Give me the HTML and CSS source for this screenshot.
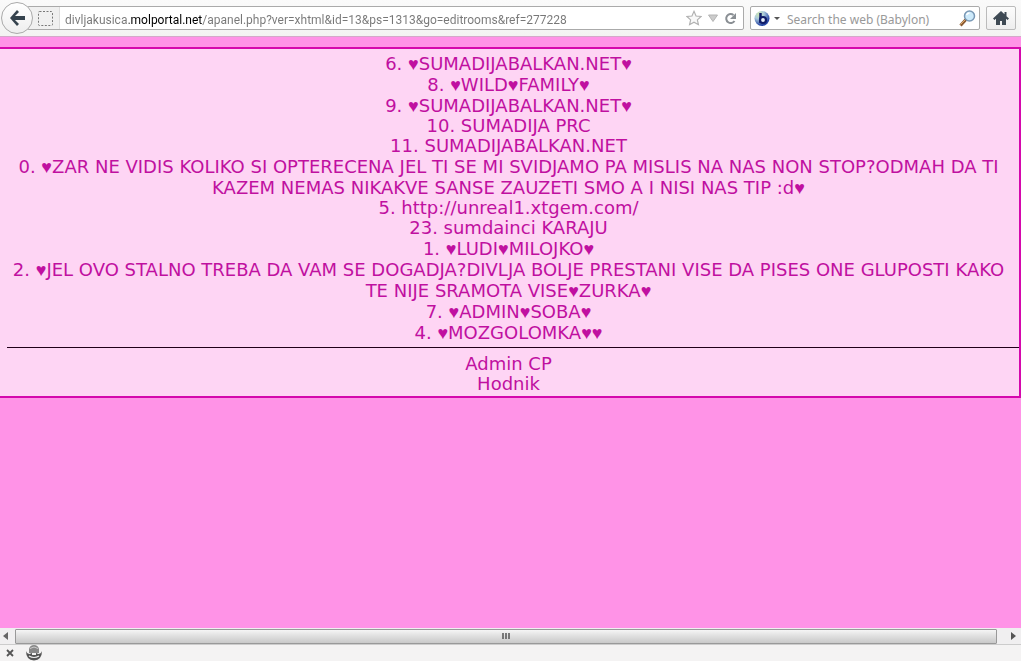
FILE: index.html
```html
<!DOCTYPE html>
<html lang="sr">
<head>
<meta charset="utf-8">
<meta name="viewport" content="width=device-width, initial-scale=1">
<title>Edit rooms</title>
<link rel="stylesheet" href="styles.css">
</head>
<body>
<header class="toolbar">
  <button class="back" type="button" aria-label="Back">
    <svg width="18" height="18" viewBox="0 0 18 18"><path d="M9 1 2 9l7 8 2-2-4-4h10V7H7l4-4z" fill="#35424d"/></svg>
  </button>
  <div class="address">
    <span class="identity"><svg width="15" height="15" viewBox="0 0 15 15"><rect x=".5" y=".5" width="14" height="14" rx="1" fill="none" stroke="#777" stroke-dasharray="2 1.5"/></svg></span>
    <input class="url" type="text" aria-label="Address" value="divljakusica.molportal.net/apanel.php?ver=xhtml&amp;id=13&amp;ps=1313&amp;go=editrooms&amp;ref=277228">
    <button class="icon" type="button" aria-label="Bookmark">
      <svg width="16" height="16" viewBox="0 0 18 17"><path d="m9 1 2.300 5.200 5.700.6-4.200 3.800 1.200 5.400-5-2.800L4 16l1.200-5.400L1 6.800l5.700-.6z" fill="#f8f8f8" stroke="#b0b0b0" stroke-width="1.300"/></svg>
    </button>
    <button class="icon" type="button" aria-label="History">
      <svg width="10" height="8" viewBox="0 0 10 8"><path d="M.5 1h9L5 7.500z" fill="#ccc" stroke="#b4b4b4"/></svg>
    </button>
    <button class="icon" type="button" aria-label="Reload">
      <svg width="13" height="13" viewBox="0 0 13 13"><path d="M9.500 3A4.500 4.500 0 1 0 10.500 9" fill="none" stroke="#8a8f94" stroke-width="2"/><path d="M12 1v6H6z" fill="#8a8f94"/></svg>
    </button>
  </div>
  <div class="search">
    <button class="icon engine" type="button" aria-label="Search engine">
      <svg width="28" height="17" viewBox="0 0 28 17"><defs><radialGradient id="orb" cx="30%" cy="20%" r="75%"><stop offset="0" stop-color="#cfe8b4"/><stop offset=".45" stop-color="#a9c9dc"/><stop offset="1" stop-color="#2746a4"/></radialGradient></defs><circle cx="8" cy="8.500" r="7.500" fill="url(#orb)"/><path d="M6.500 3v10" stroke="#101c68" stroke-width="2.500"/><circle cx="9" cy="10" r="3" fill="#e6eef8" stroke="#101c68" stroke-width="2.200"/><path d="M20 7h6l-3 3z" fill="#555"/></svg>
    </button>
    <input class="query" type="text" aria-label="Search" placeholder="Search the web (Babylon)">
    <button class="icon" type="button" aria-label="Search">
      <svg width="17" height="17" viewBox="0 0 17 17"><path d="m7 9.500-5.500 6" stroke="#8b5a32" stroke-width="3"/><path d="m6.500 9.500-5 5" stroke="#e0aa68"/><circle cx="10.500" cy="6" r="5" fill="#cdeafb" stroke="#7998b5" stroke-width="1.500"/><path d="M7.500 5q1-2 3-2" fill="none" stroke="#fff" stroke-width="1.500"/></svg>
    </button>
  </div>
  <button class="home" type="button" aria-label="Home">
    <svg width="16" height="14" viewBox="0 0 16 14"><path d="M8 0 0 7.500 1.500 9 3 7.800V14h4v-4h2v4h4V7.800L14.500 9 16 7.500l-2.500-2.300V1h-2v2.300z" fill="#3f4a54"/></svg>
  </button>
</header>

<main class="page">
  <section class="panel">
    <nav class="rooms">
      <a href="#">6. <i>♥</i>SUMADIJABALKAN.NET<i>♥</i></a>
      <a href="#">8. <i>♥</i>WILD<i>♥</i>FAMILY<i>♥</i></a>
      <a href="#">9. <i>♥</i>SUMADIJABALKAN.NET<i>♥</i></a>
      <a href="#" class="plain">10. SUMADIJA PRC</a>
      <a href="#" class="plain">11. SUMADIJABALKAN.NET</a>
      <a href="#">0. <i>♥</i>ZAR NE VIDIS KOLIKO SI OPTERECENA JEL TI SE MI SVIDJAMO PA MISLIS NA NAS NON STOP?ODMAH DA TI KAZEM NEMAS NIKAKVE SANSE ZAUZETI SMO A I NISI NAS TIP :d<i>♥</i></a>
      <a href="#" class="plain">5. http://unreal1.xtgem.com/</a>
      <a href="#" class="plain">23. sumdainci KARAJU</a>
      <a href="#">1. <i>♥</i>LUDI<i>♥</i>MILOJKO<i>♥</i></a>
      <a href="#">2. <i>♥</i>JEL OVO STALNO TREBA DA VAM SE DOGADJA?DIVLJA BOLJE PRESTANI VISE DA PISES ONE GLUPOSTI KAKO TE NIJE SRAMOTA VISE<i>♥</i>ZURKA<i>♥</i></a>
      <a href="#">7. <i>♥</i>ADMIN<i>♥</i>SOBA<i>♥</i></a>
      <a href="#">4. <i>♥</i>MOZGOLOMKA<i>♥♥</i></a>
    </nav>
    <hr class="rule">
    <nav class="rooms">
      <a href="#" class="plain">Admin CP</a>
      <a href="#" class="plain">Hodnik</a>
    </nav>
  </section>
</main>

<div class="scrollbar">
  <button class="arrow" type="button" aria-label="Scroll left"><svg width="5" height="8" viewBox="0 0 5 8"><path d="M5 0v8L0 4z" fill="#666"/></svg></button>
  <div class="track"><div class="thumb"><svg width="9" height="7" viewBox="0 0 9 7"><path d="M1 0v6M4 0v6M7 0v6" stroke="#555" stroke-width="1.500"/></svg></div></div>
  <button class="arrow right" type="button" aria-label="Scroll right"><svg width="5" height="8" viewBox="0 0 5 8"><path d="M0 0v8l5-4z" fill="#555"/></svg></button>
</div>
<footer class="addons">
  <button class="icon" type="button" aria-label="Close add-on bar"><svg width="8" height="8" viewBox="0 0 8 8"><path d="m1 1 6 6m0-6L1 7" stroke="#555" stroke-width="1.800"/></svg></button>
  <button class="icon" type="button" aria-label="Add-on"><svg width="16" height="16" viewBox="0 0 16 16"><path d="M3 4q1-4 5-4t5 4v4H3z" fill="#888"/><path d="M4 3.500q4-3 8 0" fill="none" stroke="#ccc"/><path d="M0 6q1 3 4 3 1-1 2-1v2h4V8q1 0 2 1 3 0 4-3 0 9-8 9.500Q0 15 0 6" fill="#555"/><path d="M3 11q5 3 10 0" fill="none" stroke="#eee" stroke-width="1.200"/></svg></button>
</footer>
</body>
</html>
```
FILE: styles.css
```css
* { box-sizing: border-box; }
body {
  margin: 0;
  min-height: 100vh;
  display: flex;
  flex-direction: column;
  background: #f4f3f3;
  font-family: "DejaVu Sans", Verdana, sans-serif;
}
button { padding: 0; border: 0; background: none; display: flex; align-items: center; justify-content: center; }
svg { display: block; flex: none; }
input { border: 0; outline: 0; padding: 0; min-width: 0; background: none; font: 12px "Noto Sans", sans-serif; }

.toolbar {
  height: 37px;
  padding: 0 5px 0 1px;
  display: flex;
  align-items: center;
  background: linear-gradient(#fafafa, #f3f3f2);
  border-bottom: 1px solid #d3a9c9;
}
.back {
  width: 32px;
  height: 32px;
  flex: none;
  z-index: 1;
  border: 1px solid #aaa;
  border-radius: 50%;
  background: linear-gradient(#fff, #eee);
}
.address, .search {
  height: 24px;
  display: flex;
  align-items: center;
  border: 1px solid #aaa;
  border-radius: 2px;
  background: #fff;
}
.address { flex: 1; margin-left: -6px; padding-right: 6px; gap: 6px; }
.identity {
  width: 32px;
  height: 22px;
  padding-left: 10px;
  display: flex;
  align-items: center;
  background: #f0f0f0;
  border-right: 1px solid #ddd;
}
.url {
  flex: 1;
  height: 22px;
  padding-top: 3px;
  margin-left: -1px;
  font-family: Roboto, sans-serif;
  color: transparent;
  background: linear-gradient(90deg, #777 64px, #000 64px, #000 137px, #777 137px);
  -webkit-background-clip: text;
  background-clip: text;
}
.search { width: 230px; margin: 0 6px; padding: 0 3px; gap: 5px; }
.query { flex: 1; height: 22px; padding-top: 2px; }
.query::placeholder { color: #999; opacity: 1; }
.home {
  width: 30px;
  height: 24px;
  border: 1px solid #bbb;
  border-radius: 2px;
  background: linear-gradient(#fcfcfc, #eee);
}

.page { flex: 1; padding-top: 10px; background: #ff93e7; }
.panel {
  padding: 4px 0 2px 7px;
  border: 2px solid #d508ad;
  border-left: 0;
  background: #fed5f4;
}
.rooms { padding-right: 9px; text-align: center; font-size: 18px; line-height: 21px; }
.rooms a { display: block; color: #c010a0; text-decoration: none; }
.rooms .plain { line-height: 20px; }
.rooms i { font-family: "Liberation Sans", sans-serif; font-style: normal; line-height: 16px; }
.rule { margin: 4px 0 6px; border: 0; border-top: 1px solid #200018; }

.scrollbar { height: 17px; display: flex; align-items: center; background: #f0eff0; border-bottom: 1px solid #ccc; }
.arrow { width: 15px; flex: none; padding-right: 4px; }
.right { width: 24px; padding: 0 0 0 8px; }
.track { flex: 1; }
.thumb {
  height: 15px;
  display: flex;
  align-items: center;
  justify-content: center;
  border: 1px solid #999;
  border-radius: 1px;
  background: linear-gradient(#f5f5f5, #dedede 50%, #c9c9c9);
}
.addons { height: 16px; padding: 0 6px; display: flex; align-items: center; gap: 12px; }
```
